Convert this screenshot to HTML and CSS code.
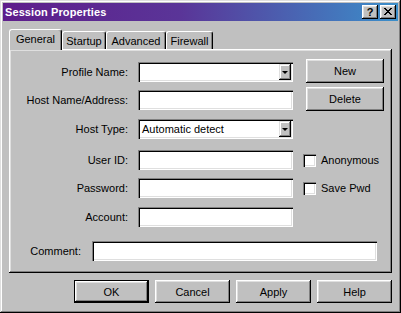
FILE: index.html
```html
<!DOCTYPE html>
<html>
<head>
<meta charset="utf-8">
<title>Session Properties</title>
<link rel="stylesheet" href="styles.css">
</head>
<body>
<div class="window">
  <div class="titlebar">
    <span class="title">Session Properties</span>
    <div class="tbtns">
      <span class="tbtn">?</span>
      <span class="tbtn"><svg width="8" height="7" viewBox="0 0 8 7" shape-rendering="crispEdges"><path d="M0 0h2v1h-2zM6 0h2v1h-2zM1 1h2v1h-2zM5 1h2v1h-2zM2 2h4v1h-4zM3 3h2v1h-2zM2 4h4v1h-4zM1 5h2v1h-2zM5 5h2v1h-2zM0 6h2v1h-2zM6 6h2v1h-2z" fill="#000"/></svg></span>
    </div>
  </div>
  <div class="tabs">
    <div class="tab active t-general">General</div>
    <div class="tab t-startup">Startup</div>
    <div class="tab t-advanced">Advanced</div>
    <div class="tab t-firewall">Firewall</div>
  </div>
  <div class="panel">
    <div class="row r1">
      <span class="lbl">Profile Name:</span>
      <div class="field combo"><span class="val"></span><span class="ddbtn"><span class="arrow"></span></span></div>
      <button class="btn side">New</button>
    </div>
    <div class="row r2">
      <span class="lbl">Host Name/Address:</span>
      <div class="field"></div>
      <button class="btn side">Delete</button>
    </div>
    <div class="row r3">
      <span class="lbl">Host Type:</span>
      <div class="field combo"><span class="val">Automatic detect</span><span class="ddbtn"><span class="arrow"></span></span></div>
    </div>
    <div class="row r4">
      <span class="lbl">User ID:</span>
      <div class="field"></div>
      <div class="check"><span class="box"></span><span>Anonymous</span></div>
    </div>
    <div class="row r5">
      <span class="lbl">Password:</span>
      <div class="field"></div>
      <div class="check"><span class="box"></span><span>Save Pwd</span></div>
    </div>
    <div class="row r6">
      <span class="lbl">Account:</span>
      <div class="field"></div>
    </div>
    <div class="row r7 comment">
      <span class="lbl">Comment:</span>
      <div class="field wide"></div>
    </div>
  </div>
  <div class="actions">
    <button class="btn act default">OK</button>
    <button class="btn act">Cancel</button>
    <button class="btn act">Apply</button>
    <button class="btn act">Help</button>
  </div>
</div>
</body>
</html>
```
FILE: styles.css
```css
html, body {
  margin: 0;
  padding: 0;
  background: #c0c0c0;
}

.window {
  width: 401px;
  height: 313px;
  box-sizing: border-box;
  padding: 3px;
  background: #c0c0c0;
  box-shadow: inset -1px -1px #000, inset 1px 1px #dfdfdf, inset -2px -2px #808080, inset 2px 2px #fff;
  display: flex;
  flex-direction: column;
  font: 11px "Liberation Sans", Arial, sans-serif;
  color: #000;
}

.titlebar {
  height: 18px;
  flex: none;
  display: flex;
  align-items: center;
  justify-content: space-between;
  padding: 0 2px 0 2px;
  background: linear-gradient(to right, #5e1d8b 0%, #5a3598 45%, #3b8fca 100%);
}

.title {
  color: #fff;
  font-weight: bold;
  font-size: 11px;
  letter-spacing: 0.1px;
}

.tbtns {
  display: flex;
  gap: 2px;
}

.tbtn {
  width: 16px;
  height: 14px;
  box-sizing: border-box;
  background: #c0c0c0;
  box-shadow: inset -1px -1px #000, inset 1px 1px #fff, inset -2px -2px #808080, inset 2px 2px #dfdfdf;
  display: flex;
  align-items: center;
  justify-content: center;
  font-weight: bold;
  font-size: 11px;
  line-height: 14px;
  padding-bottom: 1px;
}

.tabs {
  flex: none;
  display: flex;
  align-items: flex-end;
  height: 20px;
  margin: 8px 6px 0 6px;
  position: relative;
  z-index: 1;
}

.tab {
  box-sizing: border-box;
  height: 18px;
  background: #c0c0c0;
  border-left: 1px solid #fff;
  border-top: 1px solid #fff;
  border-right: 1px solid #000;
  box-shadow: inset -1px 0 #808080;
  border-radius: 3px 3px 0 0;
  text-align: center;
  line-height: 17px;
  padding-top: 1px;
}

.tab.active {
  height: 21px;
  margin-bottom: -1px;
  line-height: 18px;
  padding-top: 0;
}

.t-general { width: 53px; }
.t-startup { width: 44px; }
.t-advanced { width: 60px; }
.t-firewall { width: 47px; }

.panel {
  flex: none;
  height: 224px;
  margin: 0 6px;
  box-sizing: border-box;
  padding-top: 13px;
  background: #c0c0c0;
  box-shadow: inset -1px -1px #000, inset 1px 1px #fff, inset -2px -2px #808080, inset 2px 2px #dfdfdf;
  display: flex;
  flex-direction: column;
}

.row {
  display: flex;
  align-items: center;
  height: 20px;
}

.r2 { margin-top: 8px; }
.r3 { margin-top: 9px; }
.r4 { margin-top: 11px; }
.r5 { margin-top: 8px; }
.r6 { margin-top: 9px; }
.r7 { margin-top: 14px; }

.lbl {
  width: 119px;
  margin-right: 10px;
  text-align: right;
  white-space: nowrap;
}

.comment .lbl {
  width: 72px;
  margin-right: 11px;
}

.field {
  width: 155px;
  height: 20px;
  box-sizing: border-box;
  background: #fff;
  box-shadow: inset 1px 1px #808080, inset 2px 2px #000, inset -1px -1px #fff, inset -2px -2px #dfdfdf;
}

.field.wide {
  width: 285px;
}

.combo {
  display: flex;
  align-items: center;
  justify-content: space-between;
  padding: 2px 2px 2px 4px;
}

.val {
  white-space: nowrap;
}

.ddbtn {
  width: 12px;
  height: 16px;
  box-sizing: border-box;
  background: #c0c0c0;
  box-shadow: inset -1px -1px #000, inset 1px 1px #dfdfdf, inset -2px -2px #808080, inset 2px 2px #fff;
  display: flex;
  align-items: center;
  justify-content: center;
}

.arrow {
  width: 0;
  height: 0;
  border-left: 3px solid transparent;
  border-right: 3px solid transparent;
  border-top: 3px solid #000;
  margin-top: 1px;
  margin-left: -1px;
}

.btn {
  font: inherit;
  color: #000;
  padding: 0;
  margin: 0;
  border: none;
  background: #c0c0c0;
  box-sizing: border-box;
  box-shadow: inset -1px -1px #000, inset 1px 1px #fff, inset -2px -2px #808080, inset 2px 2px #dfdfdf;
}

.btn.side {
  width: 78px;
  height: 24px;
  margin-left: 13px;
  align-self: flex-start;
  margin-top: -3px;
}

.check {
  display: flex;
  align-items: center;
  gap: 5px;
  margin-left: 10px;
}

.box {
  width: 13px;
  height: 13px;
  box-sizing: border-box;
  background: #fff;
  box-shadow: inset 1px 1px #808080, inset 2px 2px #000, inset -1px -1px #fff, inset -2px -2px #dfdfdf;
}

.actions {
  flex: none;
  display: flex;
  justify-content: flex-end;
  gap: 6px;
  margin: 7px 6px 0 0;
}

.btn.act {
  width: 75px;
  height: 23px;
}

.btn.default {
  border: 1px solid #000;
}
```
